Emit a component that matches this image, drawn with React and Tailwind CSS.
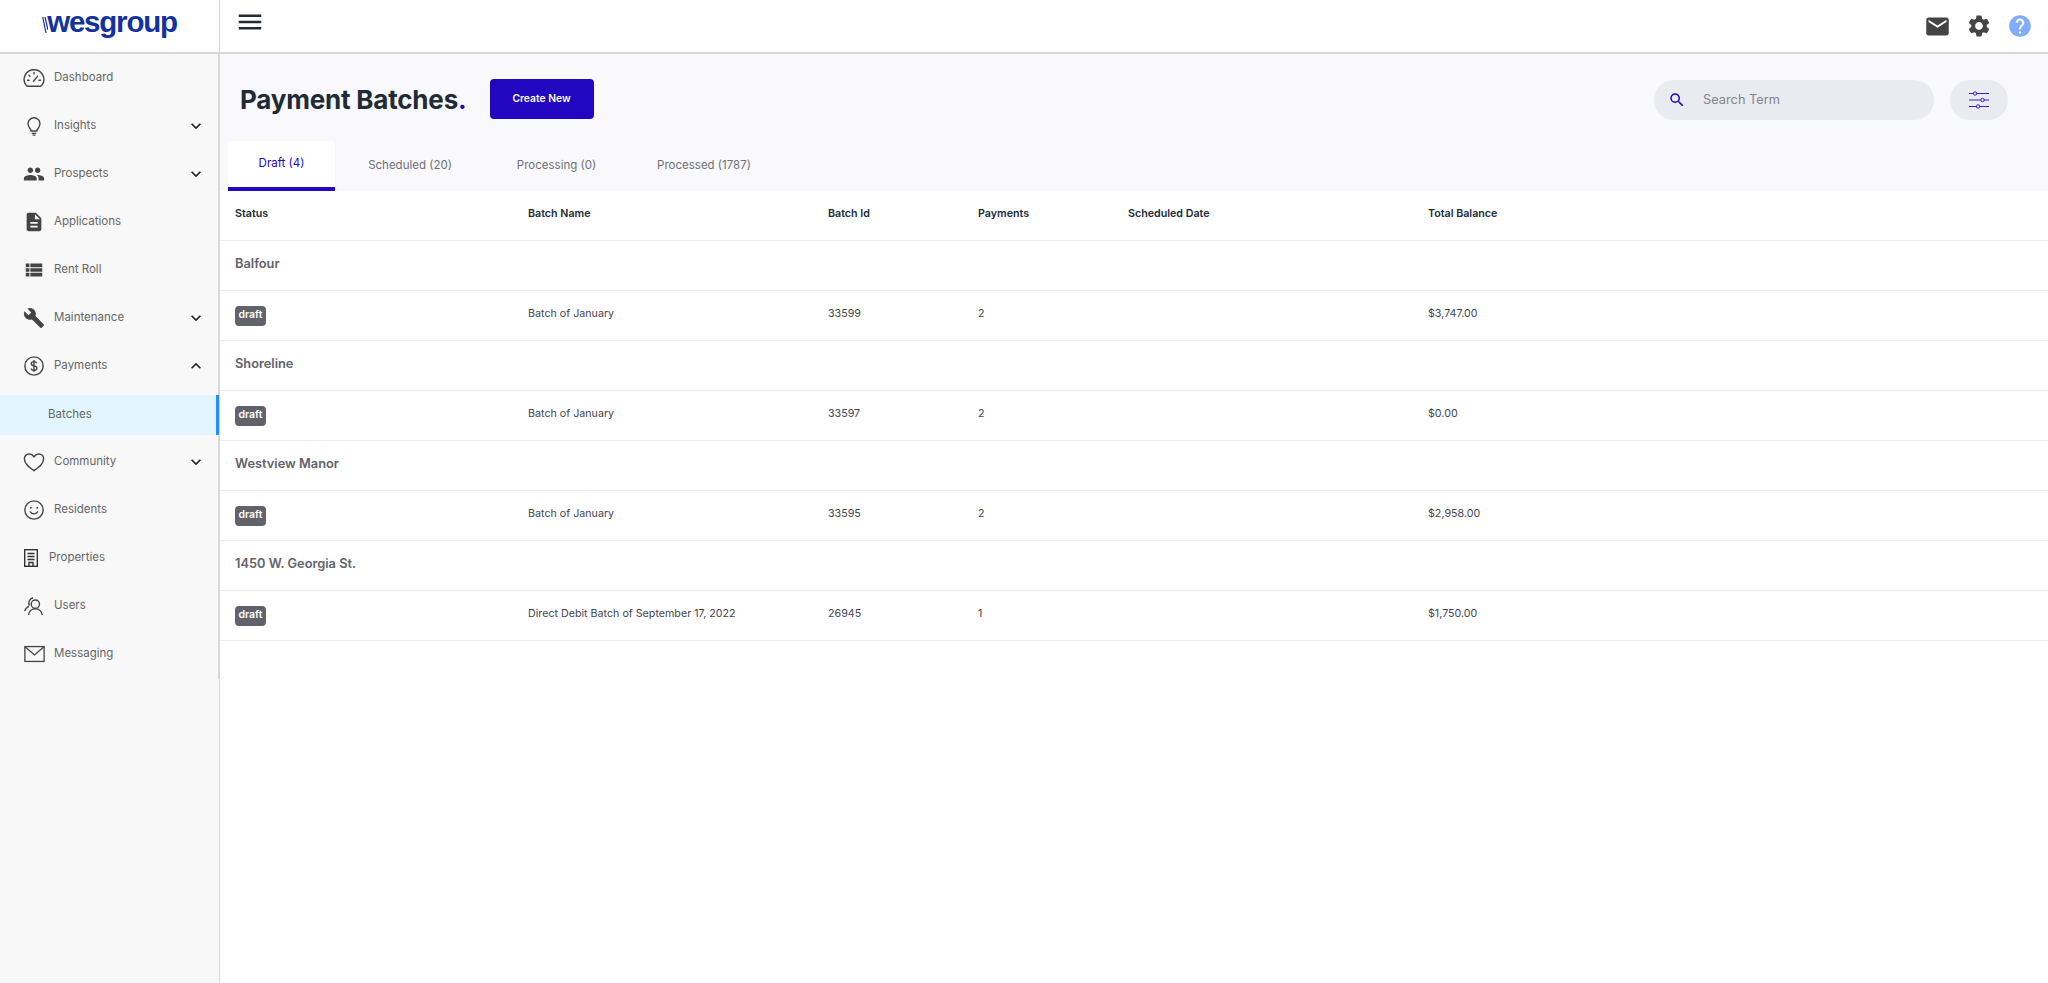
import React from "react";
import {
  MdMenu,
  MdExpandMore,
  MdExpandLess,
  MdPeople,
  MdDescription,
  MdViewList,
  MdBuild,
  MdEmail,
  MdSettings,
  MdHelp,
  MdSearch,
} from "react-icons/md";

const GaugeIcon = () => (
  <svg viewBox="0 0 24 24" className="h-[22px] w-[22px]" fill="none" stroke="#444" strokeWidth="1.5">
    <path d="M5 21h14a2 2 0 0 0 1.5-.9A10.6 10.6 0 0 0 12 3 10.600 10.600 0 0 0 3.500 20.100 2 2 0 0 0 5 21z" />
    <path d="M11.500 15.500 16 10M12 6v1.500M6.500 9l1 1M5 14.500h1.500M17.500 14.500H19" strokeLinecap="round" />
  </svg>
);

const BulbIcon = () => (
  <svg viewBox="0 0 24 24" className="h-[24px] w-[22px]" fill="none" stroke="#444" strokeWidth="1.5">
    <path d="M9 17.500c0-2-3.500-3.800-3.500-8a6.500 6.500 0 0 1 13 0c0 4.200-3.500 6-3.500 8z" />
    <path d="M9.500 20h5M10.500 22h3" />
  </svg>
);

const DollarIcon = () => (
  <svg viewBox="0 0 24 24" className="h-[22px] w-[22px]" fill="none" stroke="#444" strokeWidth="1.5">
    <circle cx="12" cy="12" r="10" />
    <path d="M15 9c-.4-1.200-1.500-1.800-3-1.800-1.700 0-3 .9-3 2.300 0 3.200 6.200 1.700 6.200 5 0 1.400-1.400 2.300-3.200 2.300-1.600 0-2.800-.7-3.200-2M12 5.500v13" />
  </svg>
);

const HeartIcon = () => (
  <svg viewBox="0 0 24 24" className="h-[22px] w-[22px]" fill="none" stroke="#444" strokeWidth="1.600">
    <path d="M12 21.500C6 17 1.500 13.500 1.500 8.500 1.500 5.500 3.800 3.300 6.700 3.300c2.200 0 4 1.100 5.300 3 1.300-1.900 3.100-3 5.300-3 2.900 0 5.200 2.200 5.200 5.200 0 5-4.500 8.500-10.500 13z" />
  </svg>
);

const SmileIcon = () => (
  <svg viewBox="0 0 24 24" className="h-[22px] w-[22px]" fill="none" stroke="#444" strokeWidth="1.500">
    <circle cx="12" cy="12" r="10" />
    <path d="M8 14c1 1.500 2.400 2.200 4 2.200s3-.7 4-2.200" strokeLinecap="round" />
    <circle cx="8.500" cy="9.500" r="1" fill="#444" stroke="none" />
    <circle cx="15.500" cy="9.500" r="1" fill="#444" stroke="none" />
  </svg>
);

const BuildingIcon = () => (
  <svg viewBox="0 0 14 18" className="h-[18px] w-[14px]" fill="none" stroke="#333" strokeWidth="1.400">
    <rect x="0.700" y="0.700" width="12.600" height="16.600" />
    <path d="M3.500 4.500h7M3.500 7.500h7M3.500 10.500h7M5 17v-3.500h4V17" />
  </svg>
);

const UsersIcon = () => (
  <svg viewBox="0 0 24 24" className="h-[22px] w-[22px]" fill="none" stroke="#444" strokeWidth="1.500">
    <circle cx="13.500" cy="10" r="4.500" />
    <path d="M6 22c.4-4 3.500-7 7.500-7s7 3 7.500 7" />
    <path d="M7 11.500C5.500 9 6.500 4 11 3M6.500 12.500C4.500 13.500 2.500 15 2 17.500" />
  </svg>
);

const MailIcon = () => (
  <svg viewBox="0 0 24 20" className="h-[18px] w-[21px]" fill="none" stroke="#444" strokeWidth="1.500">
    <rect x="1" y="1.500" width="22" height="17" />
    <path d="m1.500 2 10.500 9 10.500-9" />
  </svg>
);

const FilterIcon = () => (
  <svg viewBox="0 0 20 18" className="h-[18px] w-5" fill="none" stroke="#3a1fc4" strokeWidth="1">
    <path d="M0 2.500h4.500M7.500 2.500H20M0 9h12M15 9h5M0 15.500h7.500M10.500 15.500H20" />
    <circle cx="6" cy="2.500" r="1.700" />
    <circle cx="13.500" cy="9" r="1.700" />
    <circle cx="9" cy="15.500" r="1.700" />
  </svg>
);

const menu = [
  { label: "Dashboard", icon: <GaugeIcon /> },
  { label: "Insights", icon: <BulbIcon />, arrow: "down" },
  { label: "Prospects", icon: <MdPeople size={22} color="#444" />, arrow: "down" },
  { label: "Applications", icon: <MdDescription size={22} color="#444" /> },
  { label: "Rent Roll", icon: <MdViewList size={22} color="#444" /> },
  { label: "Maintenance", icon: <MdBuild size={22} color="#444" />, arrow: "down" },
  { label: "Payments", icon: <DollarIcon />, arrow: "up" },
];

const menuBottom = [
  { label: "Community", icon: <HeartIcon />, arrow: "down" },
  { label: "Residents", icon: <SmileIcon /> },
  { label: "Properties", icon: <BuildingIcon />, small: true },
  { label: "Users", icon: <UsersIcon /> },
  { label: "Messaging", icon: <MailIcon /> },
];

const groups = [
  { name: "Balfour", batch: "Batch of January", id: "33599", payments: "2", total: "$3,747.00" },
  { name: "Shoreline", batch: "Batch of January", id: "33597", payments: "2", total: "$0.00" },
  { name: "Westview Manor", batch: "Batch of January", id: "33595", payments: "2", total: "$2,958.00" },
  { name: "1450 W. Georgia St.", batch: "Direct Debit Batch of September 17, 2022", id: "26945", payments: "1", total: "$1,750.00" },
];

const MenuItem = ({ item }) => (
  <div className="flex h-12 items-center pr-3">
    <span
      className={
        item.small
          ? "ml-6 flex w-6 items-center"
          : "ml-[19px] mr-1 flex w-[30px] items-center justify-center"
      }
    >
      {item.icon}
    </span>
    <span className="flex-1 pl-[1px] text-[11.5px] text-[#666]">{item.label}</span>
    {item.arrow === "down" && <MdExpandMore size={20} color="#222" />}
    {item.arrow === "up" && <MdExpandLess size={20} color="#222" />}
  </div>
);

const Row = ({ children, className }) => (
  <div className={`grid grid-cols-[293px_300px_150px_150px_300px_1fr] items-center border-b border-[#ececec] pl-[15px] ${className}`}>
    {children}
  </div>
);

export default function App() {
  return (
    <div className="flex h-[983px] flex-col bg-white font-['Inter',sans-serif]">
      <header className="flex h-[54px] shrink-0 border-b-2 border-[#d8d8d8]">
        <div className="flex w-[220px] shrink-0 items-center justify-center border-r border-[#d8d8d8] pb-2">
          <svg viewBox="0 0 6 16" className="mt-[5px] h-4 w-[6px]" fill="none" stroke="#12329f" strokeWidth="1.200">
            <path d="M.7 0 4 16M3 0l3 13" />
          </svg>
          <span className="-ml-[1px] font-['Liberation_Sans',sans-serif] text-[29.500px] font-bold leading-none tracking-[-1.2px] text-[#12329f]">
            wesgroup
          </span>
        </div>
        <div className="flex flex-1 items-center justify-between pl-[15px] pr-[15px]">
          <MdMenu size={30} color="#222b33" className="-mt-2" />
          <div className="flex items-center gap-[15px]">
            <MdEmail size={27} color="#444" />
            <MdSettings size={26} color="#444" />
            <MdHelp size={26} color="#82acff" />
          </div>
        </div>
      </header>
      <div className="flex flex-1">
        <aside className="w-[220px] shrink-0 border-r border-[#d8d8d8] bg-[#f8f8f8]">
          <div className="h-[625px] border-r border-[#d8d8d8]">
            {menu.map((item) => (
              <MenuItem key={item.label} item={item} />
            ))}
            <div className="-mr-px mb-[3px] mt-[5px] flex h-10 items-center border-r-[3px] border-[#2a8cff] bg-[#e3f5ff] pb-[1px] pl-12 text-[11.5px] text-[#666]">
              Batches
            </div>
            {menuBottom.map((item) => (
              <MenuItem key={item.label} item={item} />
            ))}
          </div>
        </aside>
        <main className="flex-1">
          <div className="h-[137px] bg-[#f9f9fb]">
            <div className="flex h-[87px] items-center justify-between pl-[20px] pr-[40px] pt-1">
              <div className="flex items-center">
                <h1 className="text-[26px] font-bold tracking-[-0.2px] text-[#212b36]">
                  Payment Batches<span className="text-[#2307c0]">.</span>
                </h1>
                <button className="mb-[2px] ml-[23px] h-10 w-[104px] rounded bg-[#2307c0] text-[10.300px] font-semibold text-white">
                  Create New
                </button>
              </div>
              <div className="flex items-center gap-4">
                <div className="flex h-10 w-[280px] items-center rounded-full bg-[#eaebf0] pl-[14px]">
                  <MdSearch size={18} color="#2307c0" />
                  <span className="ml-[17px] text-[12.800px] text-[#85858f]">Search Term</span>
                </div>
                <div className="flex h-10 w-[58px] items-center justify-center rounded-full bg-[#eaebf0]">
                  <FilterIcon />
                </div>
              </div>
            </div>
            <div className="flex h-[50px] pl-2">
              <div className="flex h-[50px] w-[107px] items-center justify-center rounded-t border-b-4 border-[#2307c0] bg-white pb-[1px] text-[11.500px] text-[#2307c0]">
                Draft (4)
              </div>
              <div className="flex w-[150px] items-center justify-center text-[11.500px] text-[#6f6f78]">Scheduled (20)</div>
              <div className="flex w-[147px] items-center justify-center pr-1 text-[11.500px] text-[#6f6f78]">Processing (0)</div>
              <div className="flex w-[144px] items-center justify-center text-[11.500px] text-[#6f6f78]">Processed (1787)</div>
            </div>
          </div>
          <Row className="h-[50px] pb-[2px] text-[10.700px] font-semibold text-[#212b36]">
            <div>Status</div>
            <div>Batch Name</div>
            <div>Batch Id</div>
            <div>Payments</div>
            <div>Scheduled Date</div>
            <div>Total Balance</div>
          </Row>
          {groups.map((g) => (
            <div key={g.name}>
              <div className="flex h-[50px] items-center border-b border-[#ececec] pb-[3px] pl-[15px] text-[12.800px] font-semibold text-[#62626b]">
                {g.name}
              </div>
              <Row className="h-[50px] pb-[2px] text-[10.700px] text-[#45454d]">
                <div className="mt-[2px]">
                  <span className="inline-flex h-5 w-[31px] items-center justify-center rounded bg-[#62626b] pb-[2px] text-[10.500px] font-semibold text-white">
                    draft
                  </span>
                </div>
                <div>{g.batch}</div>
                <div>{g.id}</div>
                <div>{g.payments}</div>
                <div></div>
                <div>{g.total}</div>
              </Row>
            </div>
          ))}
        </main>
      </div>
    </div>
  );
}
